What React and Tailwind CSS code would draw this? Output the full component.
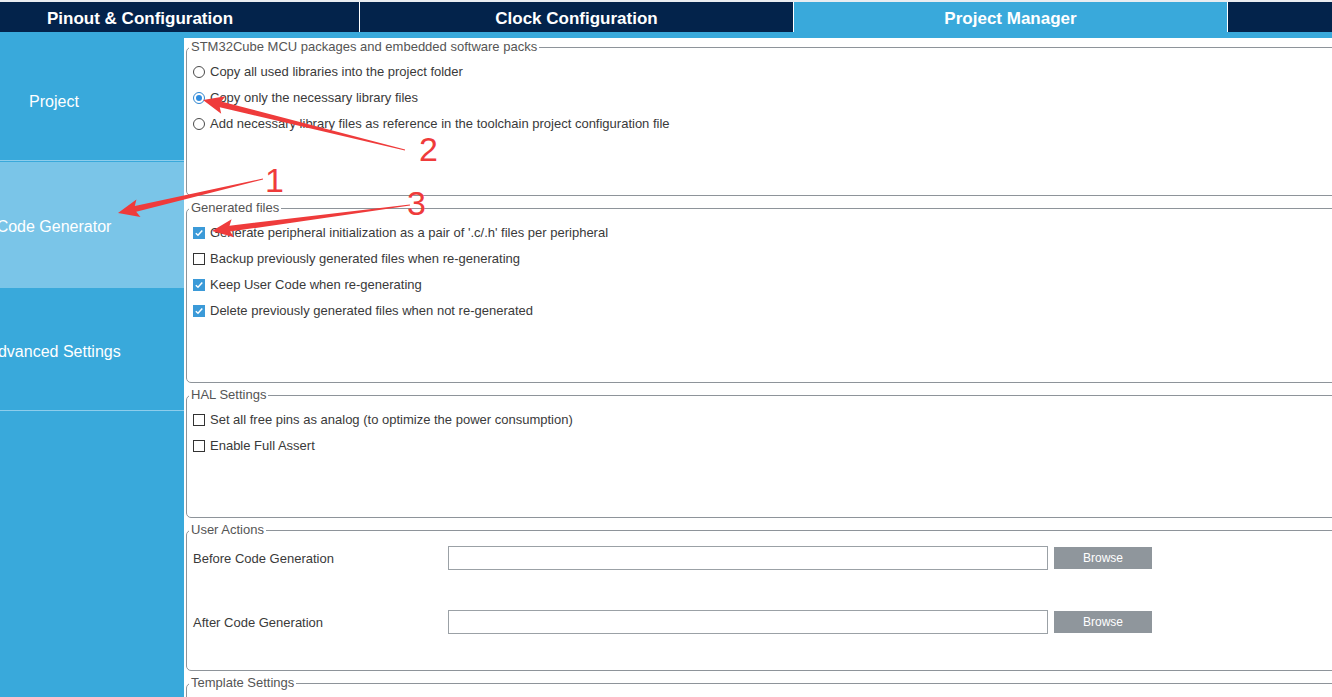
import React from 'react';

const arrow = (tx, ty, hx, hy, tailW, shaftW, headLen, headW) => {
    const dx = hx - tx;
    const dy = hy - ty;
    const len = Math.hypot(dx, dy);
    const ux = dx / len;
    const uy = dy / len;
    const nx = -uy;
    const ny = ux;
    const bx = hx - ux * headLen;
    const by = hy - uy * headLen;
    const pts = [
        [tx + nx * tailW / 2, ty + ny * tailW / 2],
        [bx + nx * shaftW / 2, by + ny * shaftW / 2],
        [bx + nx * headW / 2 - ux * 3, by + ny * headW / 2 - uy * 3],
        [hx, hy],
        [bx - nx * headW / 2 - ux * 3, by - ny * headW / 2 - uy * 3],
        [bx - nx * shaftW / 2, by - ny * shaftW / 2],
        [tx - nx * tailW / 2, ty - ny * tailW / 2],
    ];
    return pts.map((p) => p.map((v) => v.toFixed(1)).join(',')).join(' ');
};

const Radio = ({ on }) => (
    <span className={`w-[12px] h-[12px] rounded-full border flex items-center justify-center bg-white shrink-0 ${on ? 'border-[#2f86d0]' : 'border-[#4a4a4a]'}`}>
        {on && <span className="w-[6px] h-[6px] rounded-full bg-[#2f8de0]" />}
    </span>
);

const Check = ({ on }) =>
    on ? (
        <span className="w-[12px] h-[12px] bg-[#3b9ad8] flex items-center justify-center shrink-0">
            <svg width="10" height="10" viewBox="0 0 10 10">
                <path d="M1.8 5.2 L4 7.3 L8.3 2.6" fill="none" stroke="white" strokeWidth="1.5" />
            </svg>
        </span>
    ) : (
        <span className="w-[12px] h-[12px] border border-[#333] bg-white shrink-0" />
    );

const Row = ({ control, children }) => (
    <div className="flex items-center h-[26px] text-[13px] text-[#3a3a3a]">
        {control}
        <span className="ml-[5px] whitespace-nowrap">{children}</span>
    </div>
);

const Group = ({ title, className, children }) => (
    <fieldset className={`border border-[#8e949a] rounded-[5px] w-[1170px] pl-[6px] pr-0 pb-0 m-0 ${className}`}>
        <legend className="text-[13px] leading-[18px] text-[#555] px-[2px] -ml-[4px]">{title}</legend>
        {children}
    </fieldset>
);

const ActionRow = ({ label }) => (
    <div className="flex items-center h-[24px] text-[13px] text-[#3a3a3a]">
        <span className="w-[255px] pt-[1px]">{label}</span>
        <div className="w-[600px] h-[24px] border border-[#9ba1a6] bg-white" />
        <div className="ml-[6px] w-[98px] h-[22px] bg-[#8f969c] text-white text-[12px] flex items-center justify-center">Browse</div>
    </div>
);

export default function App() {
    return (
        <div className="w-[1332px] h-[697px] overflow-hidden relative bg-white font-['Liberation_Sans',Arial,sans-serif]">
            <div className="h-[2px] bg-[#e9edf1]" />
            <div className="flex h-[30px] bg-[#03234b] text-white text-[17px] font-bold">
                <div className="w-[360px] border-r border-white flex items-center pl-[47px] pt-[3px]">Pinout &amp; Configuration</div>
                <div className="w-[434px] border-r border-white flex items-center justify-center pt-[3px]">Clock Configuration</div>
                <div className="w-[434px] border-r border-white bg-[#39a9db] flex items-center justify-center pt-[3px]">Project Manager</div>
                <div className="flex-1" />
            </div>
            <div className="h-[6px] bg-[#39a9db]" />

            <div className="flex h-[659px]">
                <div className="w-[184px] bg-[#39a9db] overflow-hidden flex flex-col text-white text-[16px] shrink-0">
                    <div className="h-[123px] border-b border-[#8dcdec] flex items-center pt-[5px]">
                        <div className="w-[256px] -ml-[74px] text-center shrink-0">Project</div>
                    </div>
                    <div className="mt-[1px] h-[126px] bg-[#7ac5e8] flex items-center pt-[3px]">
                        <div className="w-[256px] -ml-[74px] text-center shrink-0">Code Generator</div>
                    </div>
                    <div className="h-[123px] border-b border-[#8dcdec] flex items-center pt-[5px]">
                        <div className="w-[256px] -ml-[74px] text-center shrink-0">Advanced Settings</div>
                    </div>
                </div>

                <div className="flex-1 overflow-hidden pl-[2px] flex flex-col gap-[3px]">
                    <Group title="STM32Cube MCU packages and embedded software packs" className="h-[158px] shrink-0">
                        <div className="pt-[3px]">
                            <Row control={<Radio />}>Copy all used libraries into the project folder</Row>
                            <Row control={<Radio on />}>Copy only the necessary library files</Row>
                            <Row control={<Radio />}>Add necessary library files as reference in the toolchain project configuration file</Row>
                        </div>
                    </Group>
                    <Group title="Generated files" className="h-[184px] shrink-0">
                        <div className="pt-[3px]">
                            <Row control={<Check on />}>Generate peripheral initialization as a pair of '.c/.h' files per peripheral</Row>
                            <Row control={<Check />}>Backup previously generated files when re-generating</Row>
                            <Row control={<Check on />}>Keep User Code when re-generating</Row>
                            <Row control={<Check on />}>Delete previously generated files when not re-generated</Row>
                        </div>
                    </Group>
                    <Group title="HAL Settings" className="h-[132px] shrink-0">
                        <div className="pt-[3px]">
                            <Row control={<Check />}>Set all free pins as analog (to optimize the power consumption)</Row>
                            <Row control={<Check />}>Enable Full Assert</Row>
                        </div>
                    </Group>
                    <Group title="User Actions" className="h-[150px] shrink-0">
                        <div className="pt-[7px] flex flex-col gap-[40px]">
                            <ActionRow label="Before Code Generation" />
                            <ActionRow label="After Code Generation" />
                        </div>
                    </Group>
                    <Group title="Template Settings" className="h-[60px] shrink-0">
                        <div />
                    </Group>
                </div>
            </div>

            <svg className="absolute inset-0 pointer-events-none" width="1332" height="697">
                <g fill="#ef3b3b">
                    <polygon points={arrow(263, 179, 118, 213, 1, 6, 18, 18)} />
                    <polygon points={arrow(405, 150, 203, 100, 1, 6, 18, 18)} />
                    <polygon points={arrow(410, 205, 212, 231, 1, 6, 18, 18)} />
                </g>
            </svg>
            <span className="absolute left-[265px] top-[160px] text-[34px] leading-[40px] text-[#ef3b3b]">1</span>
            <span className="absolute left-[419px] top-[129px] text-[34px] leading-[40px] text-[#ef3b3b]">2</span>
            <span className="absolute left-[407px] top-[183px] text-[34px] leading-[40px] text-[#ef3b3b]">3</span>
        </div>
    );
}
